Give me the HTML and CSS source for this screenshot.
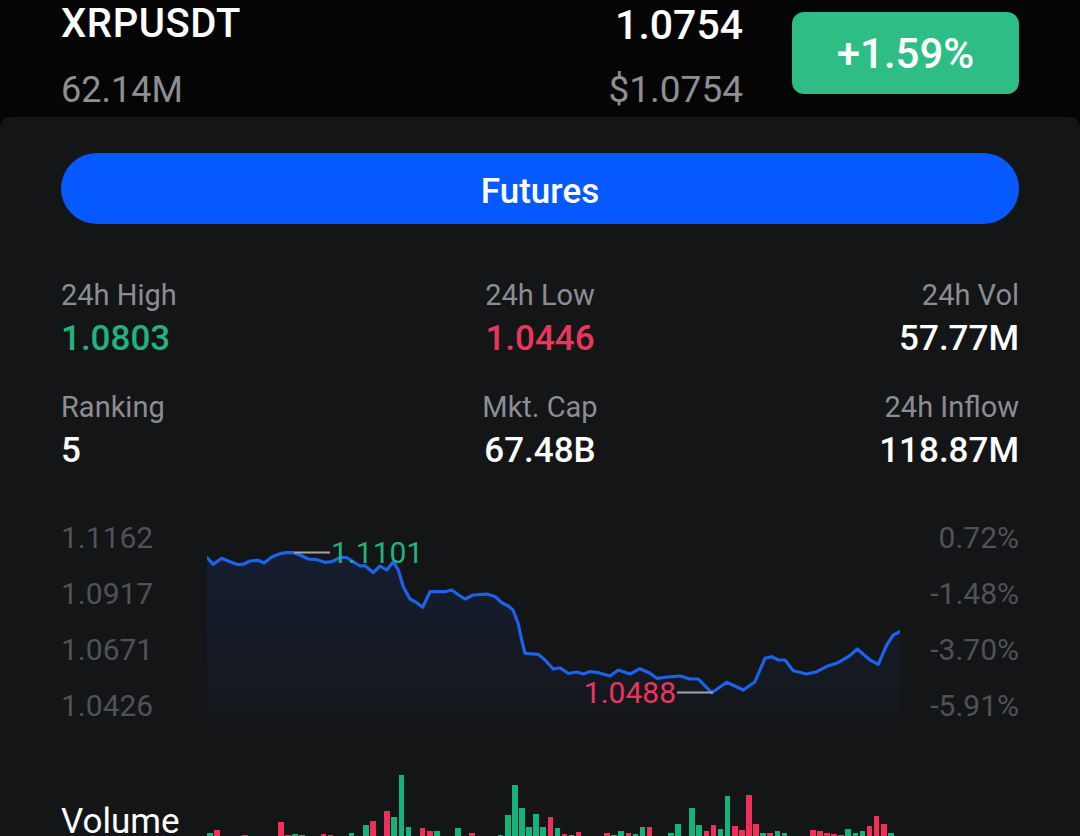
FILE: index.html
```html
<!DOCTYPE html>
<html lang="en">
<head>
    <meta charset="UTF-8">
    <meta name="viewport" content="width=device-width, initial-scale=1.0">
    <title>XRPUSDT</title>
    <link rel="stylesheet" href="styles.css">
</head>
<body>
    <header class="ticker">
        <div class="ticker-name">
            <div class="symbol">XRPUSDT</div>
            <div class="turnover">62.14M</div>
        </div>
        <div class="ticker-price">
            <div class="last">1.0754</div>
            <div class="fiat">$1.0754</div>
        </div>
        <div class="change">+1.59%</div>
    </header>

    <main class="panel">
        <button class="futures-button" type="button">Futures</button>

        <div class="stats">
            <div class="stat">
                <div class="stat-label">24h High</div>
                <div class="stat-value up">1.0803</div>
            </div>
            <div class="stat center">
                <div class="stat-label">24h Low</div>
                <div class="stat-value down">1.0446</div>
            </div>
            <div class="stat right">
                <div class="stat-label">24h Vol</div>
                <div class="stat-value">57.77M</div>
            </div>
            <div class="stat">
                <div class="stat-label">Ranking</div>
                <div class="stat-value">5</div>
            </div>
            <div class="stat center">
                <div class="stat-label">Mkt. Cap</div>
                <div class="stat-value">67.48B</div>
            </div>
            <div class="stat right">
                <div class="stat-label">24h Inflow</div>
                <div class="stat-value">118.87M</div>
            </div>
        </div>

        <div class="chart">
            <div class="axis">
                <span>1.1162</span>
                <span>1.0917</span>
                <span>1.0671</span>
                <span>1.0426</span>
            </div>
            <svg class="chart-plot" width="693" height="224" viewBox="207 510 693 224">
                <defs>
                    <linearGradient id="areaFill" x1="0" y1="0" x2="0" y2="1">
                        <stop offset="0" stop-color="#1d5fe0" stop-opacity="0.12"/>
                        <stop offset="0.7" stop-color="#1d5fe0" stop-opacity="0.05"/>
                        <stop offset="1" stop-color="#1d5fe0" stop-opacity="0"/>
                    </linearGradient>
                </defs>
                <polygon class="area" fill="url(#areaFill)" points="207,557.7 213.3,564.3 221.7,558.3 230,561.7 236.7,564.3 243.3,564.3 250,561 258.3,560.3 264,563 271.7,557 280,553.7 286.7,552.7 293.3,552.7 300,555 308.3,559 316.7,559.7 325,562.3 331.7,561.7 340,557.5 346.7,557.5 353,561.7 360,566 365,565.7 373.3,572.5 380,566 386.7,570 393.3,561.7 398.3,570 403.3,586.7 410,599 416.7,602.7 422.7,607.3 430,591.7 445,591.7 451.7,590 458,594.5 465,599 473.3,595 486.7,594 495,596.5 501.7,602.7 508.3,606 513,610 518,623 521.7,640 525,653.3 538.3,654.3 545,660 553.3,669 560,667.8 568.3,673.5 576.7,672 583.3,674 590,671.5 598.3,672.7 610,676 618.3,670 630,674 640,668.7 650,673.3 656.7,678.3 668,677 680,676 690,679 698.3,679 711.7,692.7 726.7,682.3 743.3,690 755,681.7 765,658.3 771.7,656.7 778.3,660 785,660 793.3,670.7 806.7,674 816.7,671.7 828.3,665.7 836.7,663.3 848.3,656.7 857.3,649 870,660 878.3,664.3 886.7,645 893.3,635 900,631.7 900,734 207,734"/>
                <polyline class="line" points="207,557.7 213.3,564.3 221.7,558.3 230,561.7 236.7,564.3 243.3,564.3 250,561 258.3,560.3 264,563 271.7,557 280,553.7 286.7,552.7 293.3,552.7 300,555 308.3,559 316.7,559.7 325,562.3 331.7,561.7 340,557.5 346.7,557.5 353,561.7 360,566 365,565.7 373.3,572.5 380,566 386.7,570 393.3,561.7 398.3,570 403.3,586.7 410,599 416.7,602.7 422.7,607.3 430,591.7 445,591.7 451.7,590 458,594.5 465,599 473.3,595 486.7,594 495,596.5 501.7,602.7 508.3,606 513,610 518,623 521.7,640 525,653.3 538.3,654.3 545,660 553.3,669 560,667.8 568.3,673.5 576.7,672 583.3,674 590,671.5 598.3,672.7 610,676 618.3,670 630,674 640,668.7 650,673.3 656.7,678.3 668,677 680,676 690,679 698.3,679 711.7,692.7 726.7,682.3 743.3,690 755,681.7 765,658.3 771.7,656.7 778.3,660 785,660 793.3,670.7 806.7,674 816.7,671.7 828.3,665.7 836.7,663.3 848.3,656.7 857.3,649 870,660 878.3,664.3 886.7,645 893.3,635 900,631.7"/>
                <!-- session high / low markers -->
                <line class="marker" x1="294" y1="552.5" x2="330" y2="552.5"/>
                <text class="marker-label up" x="331" y="563">1.1101</text>
                <line class="marker" x1="677" y1="692.5" x2="713" y2="692.5"/>
                <text class="marker-label down" x="676" y="703" text-anchor="end">1.0488</text>
            </svg>
            <div class="axis right">
                <span>0.72%</span>
                <span>-1.48%</span>
                <span>-3.70%</span>
                <span>-5.91%</span>
            </div>
        </div>

        <div class="volume">
            <div class="volume-label">Volume</div>
            <div class="bars" id="bars"></div>
        </div>
    </main>

    <script>
        // hourly volume, g = closed up, r = closed down
        const volume = [
            [5,'g'],[8,'r'],[1,'g'],[1,'r'],[1,'g'],[3,'r'],[2,'g'],[1,'g'],[1,'r'],[1,'g'],
            [16,'r'],[3,'r'],[4,'g'],[3,'g'],[2,'r'],[1,'g'],[4,'r'],[3,'r'],[1,'g'],[1,'r'],
            [5,'g'],[1,'r'],[13,'g'],[17,'r'],[2,'g'],[27,'r'],[21,'g'],[63,'g'],[11,'g'],[2,'g'],
            [10,'r'],[7,'r'],[7,'g'],[1,'g'],[1,'r'],[10,'g'],[2,'r'],[5,'r'],[2,'g'],[1,'g'],
            [1,'r'],[3,'g'],[23,'g'],[53,'g'],[30,'g'],[11,'g'],[24,'g'],[11,'g'],[21,'r'],[10,'g'],
            [4,'r'],[3,'g'],[6,'r'],[2,'g'],[2,'g'],[2,'g'],[5,'r'],[3,'g'],[7,'g'],[5,'r'],
            [4,'g'],[11,'g'],[11,'r'],[1,'r'],[0,'g'],[5,'g'],[14,'g'],[0,'r'],[30,'g'],[13,'g'],
            [7,'r'],[13,'r'],[9,'g'],[42,'g'],[12,'r'],[8,'r'],[43,'r'],[14,'r'],[5,'g'],[5,'r'],
            [7,'g'],[5,'g'],[1,'g'],[1,'r'],[0,'r'],[8,'r'],[7,'r'],[5,'r'],[4,'r'],[3,'r'],
            [9,'g'],[5,'g'],[7,'g'],[12,'r'],[22,'r'],[14,'r'],[5,'g']
        ];

        const bars = document.getElementById('bars');
        volume.forEach(([h, dir]) => {
            const bar = document.createElement('div');
            bar.className = 'bar ' + (dir === 'g' ? 'up' : 'down');
            bar.style.height = (h + 4) + 'px';
            bars.appendChild(bar);
        });
    </script>
</body>
</html>
```

FILE: styles.css
```css
html, body {
    overflow: hidden;
}
body {
    font-family: Roboto, "Noto Sans", Arial, sans-serif;
    margin: 0;
    padding: 0;
    background-color: #050505;
    color: #fff;
}
.up {
    color: #22b37c;
}
.down {
    color: #ea365e;
}

/* ticker header */
.ticker {
    height: 117px;
    padding: 0 61px;
    display: flex;
    align-items: flex-start;
    box-sizing: border-box;
}
.ticker-name {
    flex: 1;
    padding-top: 1px;
}
.symbol {
    font-size: 40px;
    font-weight: 500;
    line-height: 46px;
    letter-spacing: 0.6px;
}
.turnover {
    margin-top: 23px;
    font-size: 36px;
    line-height: 40px;
    color: #8e8f92;
}
.ticker-price {
    text-align: right;
    padding-top: 2px;
}
.last {
    font-size: 41px;
    font-weight: 500;
    line-height: 46px;
}
.fiat {
    margin-top: 21px;
    font-size: 37px;
    line-height: 42px;
    color: #8e8f92;
}
.change {
    margin: 12px 0 0 49px;
    width: 227px;
    height: 82px;
    border-radius: 12px;
    background-color: #2ebd85;
    display: flex;
    align-items: center;
    justify-content: center;
    font-size: 42px;
    font-weight: 500;
}

/* main panel */
.panel {
    background-color: #141517;
    border-radius: 10px 10px 0 0;
    padding: 36px 61px 0;
    height: 719px;
}
.futures-button {
    display: block;
    width: 100%;
    height: 71px;
    padding: 5px 0 0;
    border: none;
    border-radius: 36px;
    background-color: #0559fe;
    color: #fff;
    font-family: inherit;
    font-size: 35px;
    font-weight: 500;
    cursor: pointer;
}

.stats {
    margin-top: 53px;
    display: grid;
    grid-template-columns: 1fr 1fr 1fr;
    row-gap: 30px;
}
.stat.center {
    text-align: center;
}
.stat.right {
    text-align: right;
}
.stat-label {
    font-size: 29px;
    line-height: 36px;
    color: #8b8d92;
}
.stat-value {
    margin-top: 6px;
    font-size: 35px;
    font-weight: 500;
    line-height: 40px;
}

/* price chart */
.chart {
    margin-top: 39px;
    height: 224px;
    display: flex;
}
.axis {
    width: 146px;
    display: flex;
    flex-direction: column;
    font-size: 30px;
    color: #4f5257;
}
.axis span {
    line-height: 56px;
}
.axis.right {
    width: 119px;
    text-align: right;
}
.chart-plot {
    display: block;
    flex: none;
}
.line {
    fill: none;
    stroke: #1c62ea;
    stroke-width: 3.2;
    stroke-linejoin: round;
    stroke-linecap: round;
}
.marker {
    stroke: #a2a3a6;
    stroke-width: 2;
}
.marker-label {
    font-family: Roboto, "Noto Sans", sans-serif;
    font-size: 30px;
}
.marker-label.up {
    fill: #22b37c;
}
.marker-label.down {
    fill: #ea365e;
}

/* volume */
.volume {
    margin-top: 28px;
    height: 80px;
    display: flex;
    align-items: flex-end;
}
.volume-label {
    width: 146px;
    flex: none;
    font-size: 35px;
    line-height: 40px;
}
.bars {
    display: flex;
    align-items: flex-end;
    gap: 1.5px;
    height: 80px;
}
.bar {
    width: 5.6px;
    flex: none;
}
.bar.up {
    background-color: #12b47c;
}
.bar.down {
    background-color: #f02f5a;
}
```
